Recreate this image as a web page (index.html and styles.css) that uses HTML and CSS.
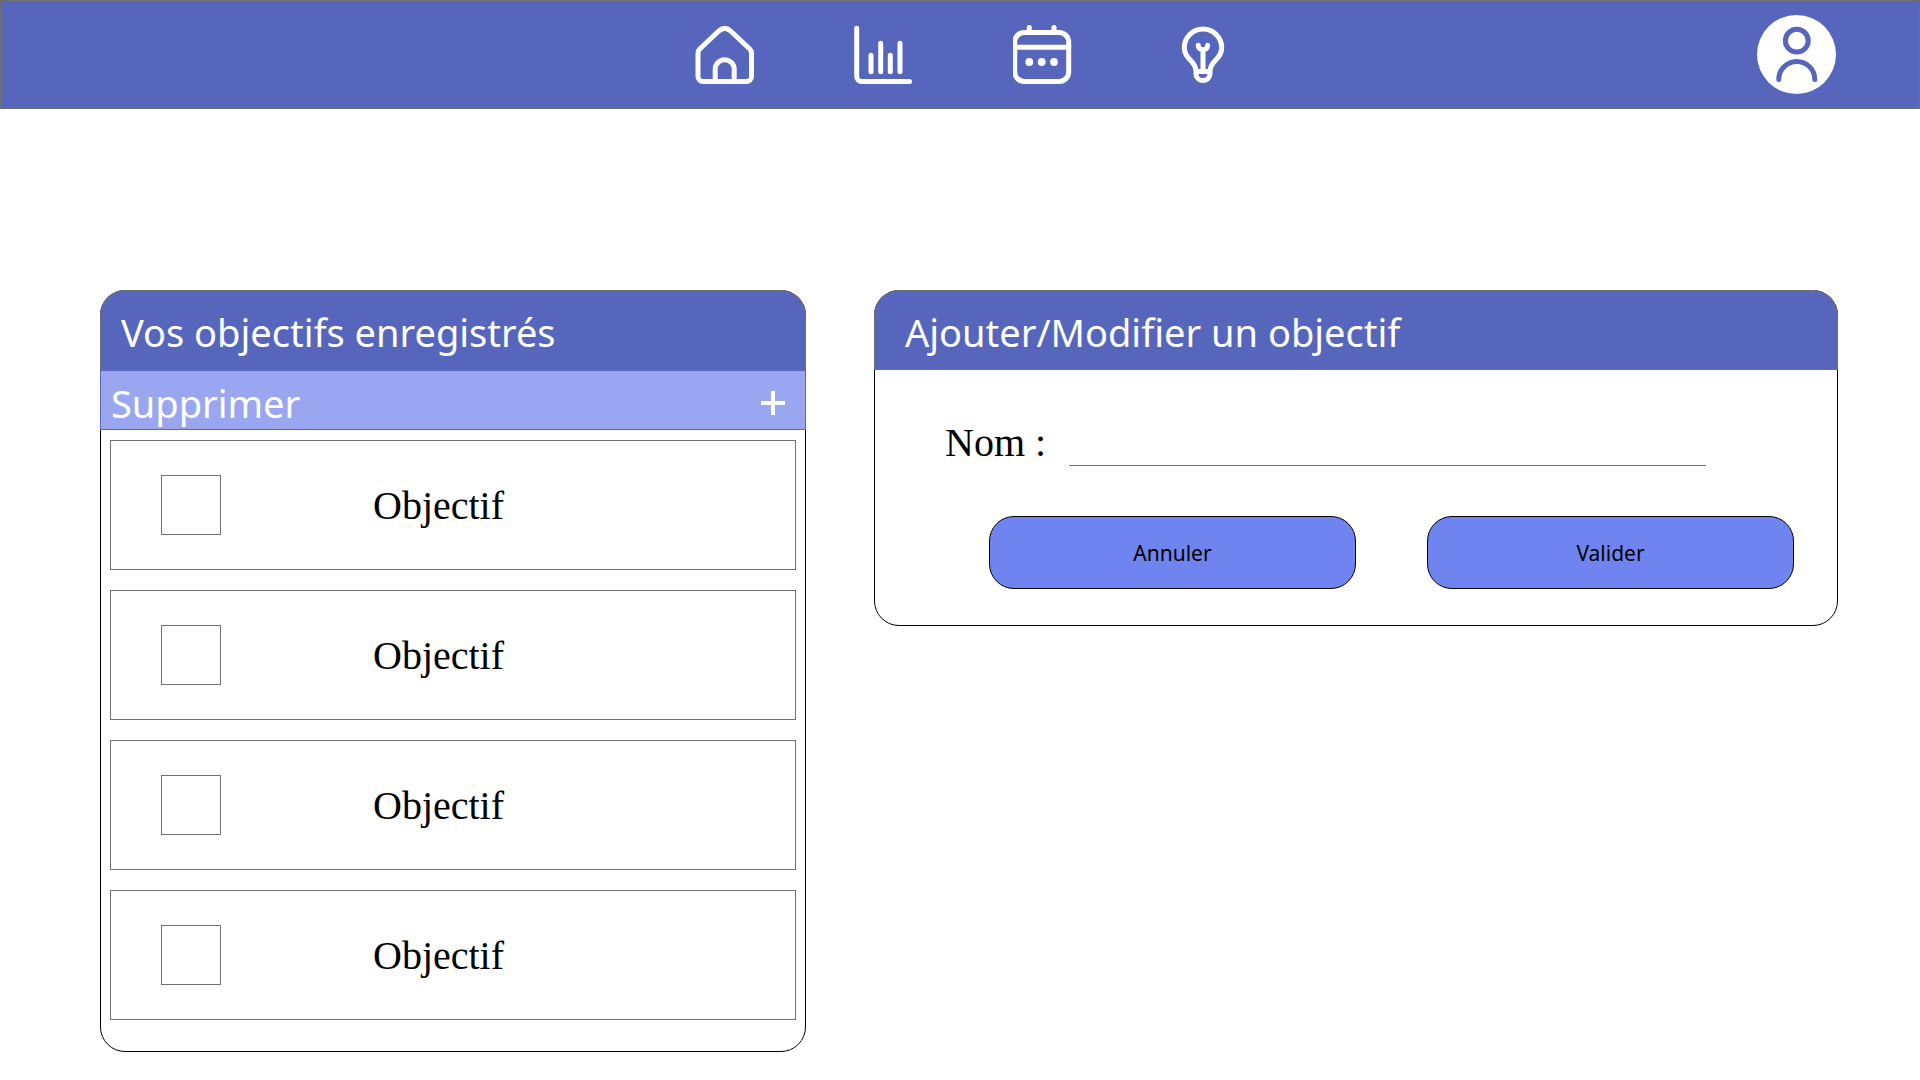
FILE: index.html
```html
<!DOCTYPE html>
<html lang="fr">
<head>
  <meta charset="utf-8">
  <meta name="viewport" content="width=device-width, initial-scale=1">
  <title>Objectifs</title>
  <link rel="stylesheet" href="styles.css">
</head>
<body>
  <header class="topbar">
    <nav class="nav">
      <a href="#accueil" aria-label="Accueil">
        <svg class="icon" viewBox="0 0 60 60"><path d="M3 28Q3 25.6 5 23.7L24 5.8Q29.7 .8 35.4 5.8L54.5 23.7Q56.5 25.6 56.5 28V51.5a5 5 0 0 1-5 5H8a5 5 0 0 1-5-5Z"/><path d="M20.2 56V44.2a9.5 9.5 0 0 1 19 0V56"/></svg>
      </a>
      <a href="#statistiques" aria-label="Statistiques">
        <svg class="icon" viewBox="0 0 60 60"><path d="M2.7 3.2V51.5a5 5 0 0 0 5 5H55.5M17 30.2V46.8M26.7 18.2V46.8M36.3 30.2V46.8M46 18.2V46.8"/></svg>
      </a>
      <a href="#calendrier" aria-label="Calendrier">
        <svg class="icon" viewBox="0 0 60 60"><rect x="1.7" y="7.6" width="54" height="48.8" rx="9.5"/><path d="M1.7 22.3H55.7M16.3 2.5V7.5M41 2.5V7.5"/><g class="dots"><circle cx="16.3" cy="37" r="3.9"/><circle cx="28.7" cy="37" r="3.9"/><circle cx="41" cy="37" r="3.9"/></g></svg>
      </a>
      <a href="#conseils" aria-label="Conseils">
        <svg class="icon" viewBox="0 0 60 60"><path d="M24 46.5C24 35 12.3 35 12.3 22.7A18.7 18.7 0 0 1 49.7 22.7C49.7 35 38 35 38 46.5ZM24 46.5V49a6.5 6.5 0 0 0 6.5 6.5h1A6.5 6.5 0 0 0 38 49V46.5"/><path d="M26.2 20.3C26.2 23 28 24.8 31 24.8S35.6 23 35.6 20.3M31 25V46"/></svg>
      </a>
    </nav>
    <a class="profile" href="#profil" aria-label="Profil">
      <svg class="avatar" viewBox="0 0 79 79"><circle class="disc" cx="39.5" cy="39.5" r="39.5"/><circle cx="39.8" cy="25.7" r="11.4"/><path d="M21.8 64.4a18 18 0 0 1 36 0"/></svg>
    </a>
  </header>

  <main class="content">
    <section class="panel">
      <h1 class="panel-title">Vos objectifs enregistrés</h1>
      <div class="toolbar">
        <button class="tool" type="button">Supprimer</button>
        <button class="tool" type="button" aria-label="Ajouter">
          <svg class="plus" viewBox="0 0 24 24"><path d="M0 12H24M12 0V24"/></svg>
        </button>
      </div>
      <ul class="goals">
        <li class="goal"><input class="check" type="checkbox" id="goal1"><label class="goal-name" for="goal1">Objectif</label></li>
        <li class="goal"><input class="check" type="checkbox" id="goal2"><label class="goal-name" for="goal2">Objectif</label></li>
        <li class="goal"><input class="check" type="checkbox" id="goal3"><label class="goal-name" for="goal3">Objectif</label></li>
        <li class="goal"><input class="check" type="checkbox" id="goal4"><label class="goal-name" for="goal4">Objectif</label></li>
      </ul>
    </section>

    <section class="panel">
      <h2 class="panel-title panel-title-form">Ajouter/Modifier un objectif</h2>
      <form class="form">
        <div class="field">
          <label for="name">Nom :</label>
          <input class="text-input" type="text" id="name">
        </div>
        <div class="actions">
          <button class="button" type="reset">Annuler</button>
          <button class="button" type="button">Valider</button>
        </div>
      </form>
    </section>
  </main>
</body>
</html>
```
FILE: styles.css
```css
* {
  box-sizing: border-box;
}

body {
  margin: 0;
  background: #fff;
  color: #000;
  font-family: "Liberation Serif", "Times New Roman", serif;
  font-size: 40px;
  line-height: 46px;
}

.topbar {
  display: grid;
  grid-template-columns: 1fr auto 1fr;
  align-items: center;
  height: 109px;
  padding: 0 83px;
  border: 1px solid #707070;
  background: #5666bd;
}

.nav {
  display: flex;
  grid-column: 2;
  gap: 99px;
  padding-left: 7px;
}

.nav a,
.profile {
  display: block;
}

.profile {
  justify-self: end;
}

.icon,
.avatar,
.plus {
  display: block;
  fill: none;
  stroke: #fff;
  stroke-width: 5;
  stroke-linecap: round;
}

.icon {
  width: 60px;
  height: 60px;
}

.dots {
  fill: #fff;
  stroke: none;
}

.avatar {
  width: 79px;
  height: 79px;
  stroke: #5666bd;
}

.disc {
  fill: #fff;
  stroke: none;
}

.plus {
  width: 24px;
  height: 24px;
  stroke-width: 4;
  stroke-linecap: butt;
}

.content {
  display: grid;
  grid-template-columns: 706fr 964fr;
  align-items: start;
  gap: 68px;
  padding: 181px 82px 28px 100px;
}

.panel {
  border: 1px solid #000;
  border-radius: 25px;
}

.panel-title {
  margin: -1px -1px 0;
  padding: 17px 20px 13px;
  border: 1px solid #707070;
  border-radius: 25px 25px 0 0;
  background: #5666bd;
  color: #fff;
  font: 400 38px/48px "Noto Sans", sans-serif;
}

.panel-title-form {
  padding-left: 30px;
}

.toolbar {
  display: flex;
  align-items: center;
  justify-content: space-between;
  height: 60px;
  margin: 0 -1px;
  padding: 5px 20px 0 10px;
  border: 1px solid #5666bd;
  background: #9aa7f0;
}

.tool {
  padding: 0;
  border: 0;
  background: none;
  color: #fff;
  font: 400 38px/48px "Noto Sans", sans-serif;
}

.goals {
  display: grid;
  gap: 20px;
  margin: 0;
  padding: 10px 9px 31px;
  list-style: none;
}

.goal {
  display: flex;
  align-items: center;
  gap: 152px;
  height: 130px;
  padding-left: 50px;
  border: 1px solid #707070;
}

.goal-name {
  padding-top: 2px;
}

.check {
  appearance: none;
  width: 60px;
  height: 60px;
  margin: 0;
  border: 1px solid #707070;
  background: #fff;
}

.check:checked {
  background: #6f84ef;
}

.form {
  padding: 50px 43px 36px 70px;
}

.field {
  display: flex;
  gap: 23px;
  padding-right: 88px;
}

.text-input {
  flex: 1;
  min-width: 0;
  height: 46px;
  padding: 0;
  border: 0;
  border-bottom: 1px solid #707070;
  outline: 0;
  background: none;
  font: inherit;
}

.actions {
  display: grid;
  grid-template-columns: 1fr 1fr;
  gap: 71px;
  padding: 50px 0 0 44px;
}

.button {
  height: 73px;
  border: 1px solid #000;
  border-radius: 25px;
  background: #6f84ef;
  color: #000;
  font: 400 21px/28px "Noto Sans", sans-serif;
}
```
